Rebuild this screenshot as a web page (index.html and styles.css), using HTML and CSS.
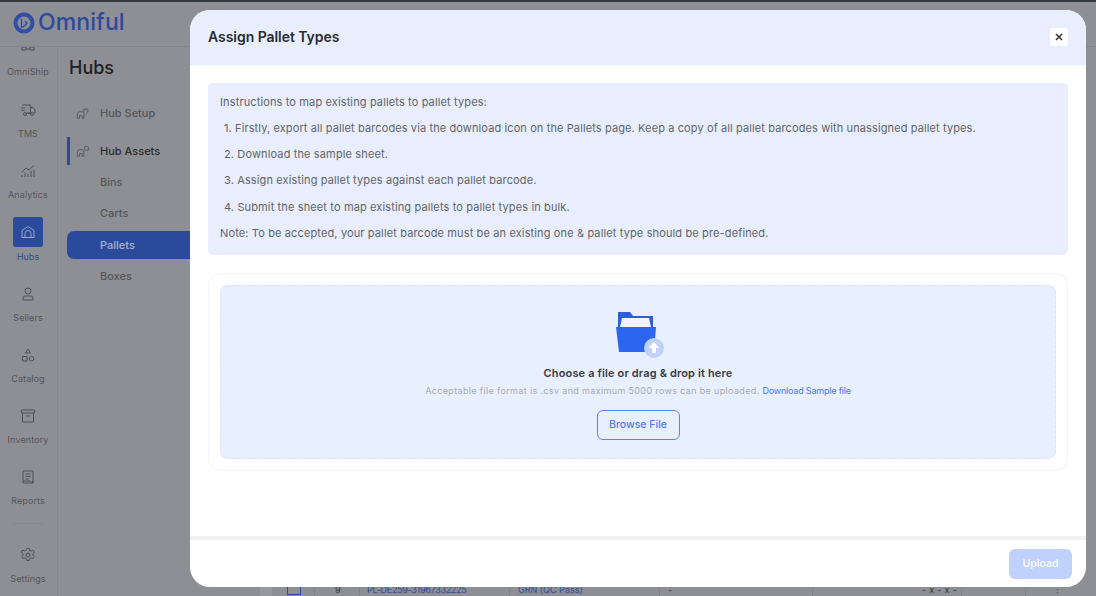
FILE: index.html
```html
<!DOCTYPE html>
<html>
  <head>
    <title>Omniful - Pallets</title>
    <link rel="stylesheet" href="styles.css">
  </head>
  <body>
    <div id="page">
      <div id="topbar">
        <svg class="logo-mark" width="22" height="22" viewBox="0 0 22 22">
          <circle cx="11" cy="11" r="8.5" fill="none" stroke="#2f4fa5" stroke-width="4" />
          <path d="M8.5 6.5v8.500h1.500l4-3.800-2.200-2.200" fill="none" stroke="#2f4fa5" stroke-width="1.400" />
        </svg>
        <span class="logo-text">Omniful</span>
      </div>
      <div id="main">
        <div id="rail">
          <div class="rail-item rail-clip">
            <svg class="rail-icon" viewBox="0 0 16 16"><path d="M5 4h6M4 9l1.500-5M12 9l-1.500-5M2 9h4v3H2zM10 9h4v3h-4zM6 11h4" /></svg>
            <span>OmniShip</span>
          </div>
          <div class="rail-item">
            <svg class="rail-icon" viewBox="0 0 16 16"><path d="M2 3h8.500v8H6.500M10.500 5.500h2.500l2 2.500v3h-1.500M1 6h4M1.500 8.500h3M7.500 11.500h2.500" /><circle cx="5" cy="12" r="1.500" /><circle cx="12" cy="12" r="1.500" /></svg>
            <span>TMS</span>
          </div>
          <div class="rail-item">
            <svg class="rail-icon" viewBox="0 0 16 16"><path d="M2 9l4-4 3 2 5-4.500M2 14v-2M5 14V9.500M8 14v-3M11 14V8M14 14V6.500" /></svg>
            <span>Analytics</span>
          </div>
          <div class="rail-item rail-active">
            <div class="rail-tile">
              <svg class="rail-icon" viewBox="0 0 16 16"><path d="M2 13.500V6.500L8 2.500l6 4v7zM5 13.500V9.500a3 3 0 0 1 6 0v4" /></svg>
            </div>
            <span>Hubs</span>
          </div>
          <div class="rail-item">
            <svg class="rail-icon" viewBox="0 0 16 16"><circle cx="8" cy="5" r="3" /><path d="M3 14v-2a2 2 0 0 1 2-2h6a2 2 0 0 1 2 2v2z" /></svg>
            <span>Sellers</span>
          </div>
          <div class="rail-item">
            <svg class="rail-icon" viewBox="0 0 16 16"><path d="M8 2l2.500 4h-5zM2.500 9.500h4.500v4.500H2.500z" /><circle cx="11.500" cy="11.700" r="2.300" /></svg>
            <span>Catalog</span>
          </div>
          <div class="rail-item">
            <svg class="rail-icon" viewBox="0 0 16 16"><path d="M1.500 2h13v3h-13zM2.500 5v9h11V5M6 8h4" /></svg>
            <span>Inventory</span>
          </div>
          <div class="rail-item">
            <svg class="rail-icon" viewBox="0 0 16 16"><path d="M3 2h10v12H3zM5.500 5h5M5.500 7.500h5M5.500 10h3M3 12h8" /><circle cx="12.500" cy="13" r="0.800" /></svg>
            <span>Reports</span>
          </div>
          <div class="rail-divider"></div>
          <div class="rail-item">
            <svg class="rail-icon" viewBox="0 0 16 16"><circle cx="8" cy="8" r="2" /><path d="M6.800 1.500h2.400l.4 1.900 1.500.7 1.700-1 1.500 2.100-1.300 1.400v1.800l1.300 1.400-1.500 2.100-1.700-1-1.500.7-.4 1.900H6.800l-.4-1.900-1.500-.7-1.700 1-1.500-2.100 1.300-1.400V6.600L1.200 5.200l1.500-2.100 1.700 1 1.500-.7z" /></svg>
            <span>Settings</span>
          </div>
        </div>
        <div id="subnav">
          <h2>Hubs</h2>
          <div class="nav-row nav-setup">
            <svg class="nav-icon" viewBox="0 0 16 16"><path d="M1.500 14V9.500a3 3 0 0 1 3-3h2.500l2 1.500V14h-2v-3h-3v3zM9 7.500V3.500h4.500V7L11 9.500" /></svg>
            <span>Hub Setup</span>
          </div>
          <div class="nav-row nav-open">
            <svg class="nav-icon" viewBox="0 0 16 16"><path d="M1.500 14V9.500a3 3 0 0 1 3-3h2.500l2 1.500V14h-2v-3h-3v3z" /><circle cx="12" cy="5" r="2.500" /></svg>
            <span>Hub Assets</span>
          </div>
          <div class="nav-sub">Bins</div>
          <div class="nav-sub">Carts</div>
          <div class="nav-sub nav-current">Pallets</div>
          <div class="nav-sub">Boxes</div>
        </div>
        <div id="table-area">
          <div class="table-row">
            <div class="cell cell-check"><span class="row-tile"></span><span class="checkbox"></span></div>
            <div class="cell cell-num">9</div>
            <div class="cell cell-code">PL-DE259-31967332225</div>
            <div class="cell cell-type">GRN (QC Pass)</div>
            <div class="cell cell-dash">-</div>
            <div class="cell cell-size">- x - x -</div>
            <div class="cell cell-blank"></div>
            <div class="cell cell-more">&#8942;</div>
          </div>
        </div>
      </div>

      <div id="modal">
        <div class="modal-head">
          <h3>Assign Pallet Types</h3>
          <button class="close-btn">
            <svg width="10" height="10" viewBox="0 0 10 10"><path d="M2 2l6 6M8 2l-6 6" /></svg>
          </button>
        </div>
        <div class="modal-body">
          <div class="instructions">
            <p>Instructions to map existing pallets to pallet types:</p>
            <ol>
              <li>1. Firstly, export all pallet barcodes via the download icon on the Pallets page. Keep a copy of all pallet barcodes with unassigned pallet types.</li>
              <li>2. Download the sample sheet.</li>
              <li>3. Assign existing pallet types against each pallet barcode.</li>
              <li>4. Submit the sheet to map existing pallets to pallet types in bulk.</li>
            </ol>
            <p>Note: To be accepted, your pallet barcode must be an existing one &amp; pallet type should be pre-defined.</p>
          </div>
          <div class="upload-card">
            <div class="dropzone">
              <svg class="folder" width="52" height="50" viewBox="0 0 52 50">
                <path d="M4 2h12l3 4h20v16H4z" fill="#2f5fd6" />
                <path d="M8 8h27l2 9H6z" fill="#f2f4f8" />
                <path d="M2 17h40l-2 25H5z" fill="#2c66f0" />
                <circle cx="40" cy="38" r="10" fill="#c0d1fb" />
                <path d="M40 32l-5.500 6H38v5h4v-5h3.500z" fill="#ffffff" />
              </svg>
              <div class="drop-title">Choose a file or drag &amp; drop it here</div>
              <div class="drop-hint">Acceptable file format is .csv and maximum 5000 rows can be uploaded. <a>Download Sample file</a></div>
              <button class="browse-btn">Browse File</button>
            </div>
          </div>
        </div>
        <div class="modal-foot">
          <button class="upload-btn">Upload</button>
        </div>
      </div>
    </div>
  </body>
</html>
```

FILE: styles.css
```css
body {
  margin: 0;
  background-color: #8e8f94;
  font-family: "Inter", "Open Sans", sans-serif;
  overflow: hidden;
}

#page {
  position: relative;
  width: 1096px;
  height: 596px;
  display: flex;
  flex-direction: column;
  overflow: hidden;
  border-top: 2px solid #38393c;
  box-sizing: border-box;
}

#topbar {
  height: 44px;
  flex: none;
  display: flex;
  align-items: center;
  gap: 3px;
  padding-left: 13px;
  border-bottom: 1px solid #848589;
}

.logo-mark {
  margin-top: -3px;
}

.logo-text {
  color: #2c4a9c;
  font-size: 23px;
  font-weight: 500;
  letter-spacing: 0.1px;
  margin-top: -4px;
}

#main {
  flex: 1;
  display: flex;
  min-height: 0;
}

#rail {
  width: 56px;
  padding-right: 1px;
  flex: none;
  border-right: 1px solid #858689;
  overflow: hidden;
  display: flex;
  flex-direction: column;
  align-items: center;
}

.rail-item {
  height: 61.2px;
  flex: none;
  width: 100%;
  display: flex;
  flex-direction: column;
  align-items: center;
  justify-content: flex-end;
  gap: 10px;
  padding-bottom: 7px;
  box-sizing: border-box;
  color: #55565a;
  font-size: 9px;
  letter-spacing: 0.1px;
}

.rail-clip {
  height: 38px;
  gap: 12px;
  padding-bottom: 8px;
}

.rail-icon {
  width: 16px;
  height: 16px;
  flex: none;
  fill: none;
  stroke: #4f5054;
  stroke-width: 1;
}

.rail-active {
  color: #2c4a9c;
  gap: 4px;
}

.rail-tile {
  width: 30px;
  height: 30px;
  border-radius: 3px;
  background-color: #2c4a9c;
  display: flex;
  align-items: center;
  justify-content: center;
}

.rail-tile .rail-icon {
  stroke: #9aa5c5;
}

.rail-divider {
  width: 30px;
  height: 1px;
  flex: none;
  background-color: #848589;
  margin: 10px 0 5px;
}

#subnav {
  width: 132px;
  flex: none;
  padding-left: 9px;
  box-sizing: border-box;
  color: #55565a;
  font-size: 11px;
  font-weight: 500;
}

#subnav h2 {
  margin: 10px 0 20px 2px;
  font-size: 18px;
  line-height: 22px;
  font-weight: 500;
  color: #1f2024;
}

.nav-row {
  height: 28px;
  display: flex;
  align-items: center;
  gap: 10px;
  padding-left: 9px;
  margin-bottom: 10px;
}

.nav-open {
  color: #2b2c30;
  border-left: 3px solid #2c4a9c;
  padding-left: 6px;
  margin-bottom: 3px;
}

.nav-icon {
  width: 14px;
  height: 14px;
  flex: none;
  fill: none;
  stroke: #55565a;
  stroke-width: 1;
}

.nav-sub {
  height: 28px;
  line-height: 28px;
  padding-left: 33px;
  margin-bottom: 3.3px;
}

.nav-current {
  background-color: #2c4a9c;
  color: #a8b3d0;
  border-radius: 7px 0 0 7px;
}

#table-area {
  flex: 1;
  min-width: 0;
  display: flex;
  flex-direction: column;
  justify-content: flex-end;
}

.table-row {
  height: 20px;
  display: flex;
  overflow: hidden;
  color: #2c4a9c;
  font-size: 9px;
  line-height: 12px;
}

.cell {
  border-right: 1px solid #838488;
  box-sizing: border-box;
  padding-top: 8px;
  padding-left: 8px;
  white-space: nowrap;
}

.cell-check {
  width: 125px;
  padding-left: 70px;
  padding-top: 3px;
  display: flex;
  gap: 15px;
}

.row-tile {
  width: 12px;
  height: 17px;
  background-color: #97989d;
}

.checkbox {
  width: 14px;
  height: 16px;
  border: 1px solid #2c4a9c;
  box-sizing: border-box;
}

.cell-num {
  width: 45px;
  color: #333438;
  padding-left: 20px;
}

.cell-code {
  width: 150px;
  padding-left: 7px;
  letter-spacing: -0.3px;
}

.cell-type {
  width: 150px;
}

.cell-dash {
  width: 153px;
  color: #333438;
}

.cell-size {
  width: 149px;
  color: #333438;
  padding-left: 109px;
  letter-spacing: 0.3px;
}

.cell-blank {
  width: 64px;
}

.cell-more {
  border: 0;
  color: #333438;
  padding-left: 27px;
}

/* modal */
#modal {
  position: absolute;
  left: 190px;
  top: 8px;
  width: 896px;
  height: 577px;
  background-color: white;
  border-radius: 20px;
  overflow: hidden;
  display: flex;
  flex-direction: column;
}

.modal-head {
  height: 55px;
  flex: none;
  box-sizing: border-box;
  background-color: #e8eefd;
  display: flex;
  align-items: center;
  justify-content: space-between;
  padding: 0 18px 2px;
}

.modal-head h3 {
  margin: 0;
  font-size: 14px;
  font-weight: 600;
  color: #2a2b30;
  letter-spacing: -0.05px;
}

.close-btn {
  width: 18px;
  height: 18px;
  padding: 0;
  border: 0;
  border-radius: 3px;
  background-color: white;
  display: flex;
  align-items: center;
  justify-content: center;
}

.close-btn path {
  stroke: #33343a;
  stroke-width: 1.5;
  fill: none;
}

.modal-body {
  flex: 1;
  padding: 18px 18px 0;
  display: flex;
  flex-direction: column;
  gap: 18px;
  border-bottom: 4px solid #f1f1f3;
}

.instructions {
  height: 172px;
  box-sizing: border-box;
  padding: 11px 12px;
  background-color: #e8eefd;
  border-radius: 5px;
  color: #636469;
  font-size: 11px;
  line-height: 16px;
  letter-spacing: 0.13px;
}

.instructions p {
  margin: 0;
}

.instructions ol {
  list-style: none;
  margin: 10px 0;
  padding: 0 0 0 4px;
}

.instructions li {
  margin-bottom: 10.2px;
}

.instructions li:first-child {
  letter-spacing: 0.11px;
}

.upload-card {
  height: 198px;
  box-sizing: border-box;
  padding: 11px;
  border: 1px solid #f3f3f8;
  border-radius: 12px;
}

.dropzone {
  height: 174px;
  border: 1px dashed #dce4f8;
  box-sizing: border-box;
  border-radius: 8px;
  background-color: #e8effe;
  display: flex;
  flex-direction: column;
  align-items: center;
  padding-top: 24px;
}

.folder {
  flex: none;
  margin-left: 4px;
}

.drop-title {
  margin-top: 5px;
  font-size: 11px;
  line-height: 16px;
  font-weight: 600;
  color: #3a3b40;
  letter-spacing: 0.14px;
}

.drop-hint {
  margin-top: 3px;
  font-size: 9px;
  line-height: 14px;
  color: #a9abb1;
  letter-spacing: 0.35px;
}

.drop-hint a {
  color: #4a78f5;
  letter-spacing: -0.2px;
}

.browse-btn {
  margin-top: 12px;
  width: 83px;
  height: 30px;
  padding: 0 0 2px;
  border: 1px solid #5a84f5;
  border-radius: 6px;
  background: transparent;
  color: #4f7bf5;
  font-family: inherit;
  font-size: 10.5px;
  font-weight: 500;
}

.modal-foot {
  height: 47px;
  flex: none;
  display: flex;
  justify-content: flex-end;
  align-items: center;
  padding: 0 14px;
}

.upload-btn {
  width: 63px;
  height: 30px;
  padding: 0;
  border: 0;
  border-radius: 6px;
  background-color: #c0d1fb;
  color: white;
  font-family: inherit;
  font-size: 10.5px;
  font-weight: 500;
}
```
